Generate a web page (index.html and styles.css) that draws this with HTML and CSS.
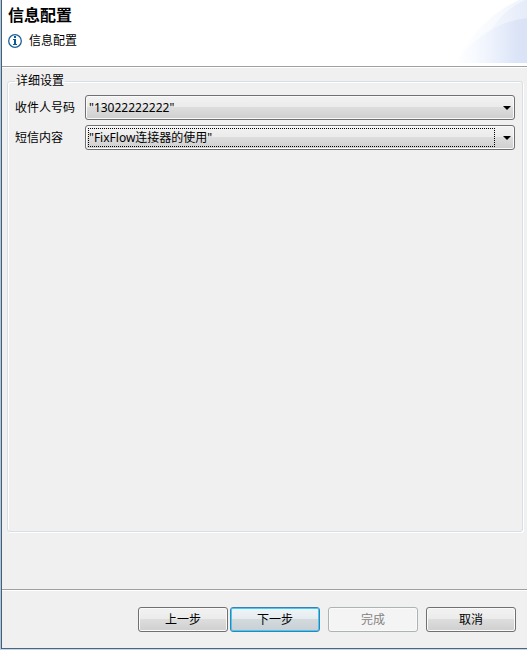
FILE: index.html
```html
<!DOCTYPE html>
<html lang="zh-CN">
<head>
<meta charset="utf-8">
<title>信息配置</title>
<link rel="stylesheet" href="styles.css">
</head>
<body>
<form class="dialog">
  <header class="banner">
    <h1 class="title">信息配置</h1>
    <p class="message">
      <svg class="info" viewBox="0 0 14 14" aria-hidden="true">
        <circle cx="7" cy="7" r="6.3" fill="#fff" stroke="#1c6197" stroke-width="1.3"/>
        <path d="M6 2h2v2H6zM5 5h3v5h1v1H5v-1h1V6H5z" fill="#0e5a94"/>
      </svg>
      <span>信息配置</span>
    </p>
    <svg class="swoosh" viewBox="0 0 72 63" aria-hidden="true">
      <defs>
        <linearGradient id="outer" x1="0" x2="1"><stop offset="0" stop-color="#fff"/><stop offset=".5" stop-color="#f8fafe"/><stop offset="1" stop-color="#eff4fb"/></linearGradient>
        <linearGradient id="middle" x1="0" x2="1"><stop offset="0" stop-color="#f3f7fd"/><stop offset="1" stop-color="#e5ebf9"/></linearGradient>
        <linearGradient id="inner" x1="0" x2="1"><stop offset="0" stop-color="#fff"/><stop offset=".3" stop-color="#f6f9fe"/><stop offset=".6" stop-color="#e9effb"/><stop offset=".85" stop-color="#dce4f7"/><stop offset="1" stop-color="#dae2f6"/></linearGradient>
      </defs>
      <path d="M0 63C14 38 34 13 64 0H72V63Z" fill="url(#outer)"/>
      <path d="M34 34Q46 11 70 0H72V63H34Z" fill="url(#middle)"/>
      <path d="M0 63Q30 23 72 18V63Z" fill="url(#inner)"/>
    </svg>
  </header>
  <main class="content">
    <fieldset class="group">
      <legend>详细设置</legend>
      <label for="receiver">收件人号码</label>
      <div class="combo">
        <select id="receiver"><option>"13022222222"</option></select>
      </div>
      <label for="body">短信内容</label>
      <div class="combo focused">
        <select id="body"><option>"FixFlow连接器的使用"</option></select>
      </div>
    </fieldset>
  </main>
  <footer class="buttons">
    <div class="pair">
      <button type="button">上一步</button>
      <button type="button" class="default">下一步</button>
    </div>
    <button type="button" disabled>完成</button>
    <button type="button">取消</button>
  </footer>
</form>
</body>
</html>
```
FILE: styles.css
```css
* {
  box-sizing: border-box;
}

body {
  margin: 0;
  color: #000;
  background: #f0f0f0;
  font: 12px/16px "Noto Sans", "Noto Sans CJK SC", sans-serif;
}

.dialog {
  display: flex;
  flex-direction: column;
  min-height: 100vh;
  border-left: 1px solid #a9c6e3;
  border-bottom: 1px solid #c3d6ea;
  box-shadow: inset 1px 0 #4d5d70, inset 0 -1px #52637c;
  padding: 0 0 1px 1px;
}

.banner {
  position: relative;
  height: 67px;
  padding: 5px 6px;
  background: #fff;
  border-bottom: 1px solid #a0a0a0;
}

.title {
  margin: 0;
  font-size: 16px;
  line-height: 20px;
}

.message {
  display: flex;
  align-items: center;
  gap: 7px;
  margin: 8px 0 0;
}

.info {
  width: 14px;
  height: 14px;
}

.swoosh {
  position: absolute;
  top: 0;
  right: 0;
  width: 72px;
  height: 63px;
}

.content {
  display: flex;
  flex: 1;
  padding: 5px 4px 57px 5px;
  border-top: 1px solid #fff;
}

.group {
  display: grid;
  flex: 1;
  grid-template-columns: 64px 1fr;
  grid-auto-rows: 25px;
  align-items: center;
  gap: 5px 6px;
  min-width: 0;
  margin: 0;
  padding: 6px 7px;
  border: 1px solid #d5dfe5;
  border-radius: 3px;
  box-shadow: inset 1px 1px #fff, 1px 1px #fff;
}

legend {
  padding: 0 1px;
}

.combo {
  position: relative;
}

select,
button {
  font: inherit;
  color: #000;
  border: 1px solid #707070;
  border-radius: 3px;
  background: linear-gradient(#f2f2f2, #ebebeb 50%, #dddddd 50%, #cfcfcf);
  box-shadow: inset 0 0 0 1px #fafafa;
}

select {
  display: block;
  appearance: none;
  width: 100%;
  height: 25px;
  padding: 0 20px 0 3px;
}

.combo::before {
  content: "";
  position: absolute;
  right: 4px;
  top: 11px;
  border: 4px solid transparent;
  border-top-color: #000;
  border-bottom: 0;
}

.focused::after {
  content: "";
  position: absolute;
  inset: 3px 20px 3px 3px;
  border: 1px dotted #000;
  pointer-events: none;
}

.buttons {
  display: flex;
  justify-content: flex-end;
  gap: 8px;
  padding: 17px 11px 16px;
  border-top: 1px solid #a0a0a0;
  box-shadow: inset 0 1px #fff;
}

.pair {
  display: flex;
  gap: 2px;
}

button {
  width: 90px;
  height: 25px;
  padding: 0;
}

.default {
  border-color: #3c7fb1;
  background: linear-gradient(#f0f4f6, #e4ebef 50%, #d2dade 50%, #c8d0d5);
  box-shadow: inset 0 0 0 1px #3fcdf5;
}

button:disabled {
  color: #838383;
  border-color: #adb2b5;
  background: #f4f4f4;
}
```
